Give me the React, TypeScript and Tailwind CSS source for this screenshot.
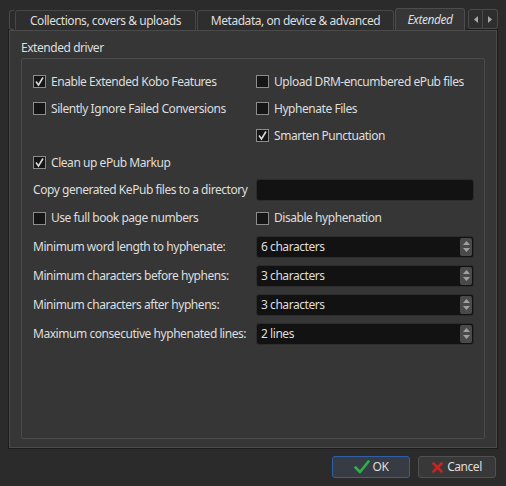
import React from "react";

function Check({ checked }: { checked?: boolean }) {
  return (
    <span className="relative inline-flex w-[13px] h-[13px] shrink-0 border border-[#8c8c8c] bg-[#161616] items-center justify-center">
      {checked && (
        <svg width="11" height="11" viewBox="0 0 11 11" className="absolute left-[0px] top-[0px]">
          <path d="M2 5.5 L4.5 9 L9 1.5" fill="none" stroke="#d8d8d8" strokeWidth="1.6" />
        </svg>
      )}
    </span>
  );
}

function CB({ label, checked }: { label: string; checked?: boolean }) {
  return (
    <div className="flex items-center gap-[5px]">
      <Check checked={checked} />
      <span>{label}</span>
    </div>
  );
}

function Spin({ value }: { value: string }) {
  return (
    <div className="flex items-center h-[22px] w-[218px] bg-[#121212] border border-[#2c2c2c] rounded-[3px] pl-[4px] pr-[1px]">
      <span className="flex-1">{value}</span>
      <span className="flex flex-col items-center justify-center gap-[3px] w-[12px] h-[18px] bg-[#4a4a4a] rounded-[2px]">
        <svg width="7" height="4" viewBox="0 0 7 4"><path d="M0 4 L3.5 0 L7 4 Z" fill="#a0a0a0" /></svg>
        <svg width="7" height="4" viewBox="0 0 7 4"><path d="M0 0 L3.5 4 L7 0 Z" fill="#a0a0a0" /></svg>
      </span>
    </div>
  );
}

export default function App() {
  return (
    <div
      className="w-[506px] h-[486px] bg-[#2b2b2b] text-[#dedede] text-[12px] tracking-[-0.45px] leading-none whitespace-nowrap overflow-hidden relative"
      style={{ fontFamily: '"Noto Sans", "Open Sans", sans-serif' }}
    >
      {/* tab bar */}
      <div className="flex items-end h-[30px] pt-[9px] pl-[9px]">
        <div className="w-[5px] h-[20px] border-l border-t border-b border-[#4a4a4a] rounded-l-[3px] mr-[1px]" />
        <div className="h-[20px] w-[181px] flex items-center justify-center border border-b-0 border-[#474747] rounded-t-[3px] bg-[#2e2e2e]">
          Collections, covers &amp; uploads
        </div>
        <div className="h-[20px] w-[197px] ml-[1px] flex items-center justify-center border border-b-0 border-[#474747] rounded-t-[3px] bg-[#2e2e2e]">
          Metadata, on device &amp; advanced
        </div>
        <div className="h-[22px] w-[70px] ml-[1px] flex items-center justify-center border border-b-0 border-[#4c4c4c] rounded-t-[3px] bg-[#363636] italic">
          Extended
        </div>
        <div className="ml-[3px] mb-[1px] flex h-[20px]">
          <div className="w-[15px] h-[20px] border border-[#4a4a4a] rounded-l-[3px] bg-[#2e2e2e] flex items-center justify-center">
            <svg width="4" height="7" viewBox="0 0 4 7"><path d="M4 0 L0 3.5 L4 7 Z" fill="#a8a8a8" /></svg>
          </div>
          <div className="w-[15px] h-[20px] border border-l-0 border-[#4a4a4a] rounded-r-[3px] bg-[#2e2e2e] flex items-center justify-center">
            <svg width="4" height="7" viewBox="0 0 4 7"><path d="M0 0 L4 3.5 L0 7 Z" fill="#a8a8a8" /></svg>
          </div>
        </div>
      </div>

      {/* pane */}
      <div className="ml-[9px] w-[488px] h-[418px] border border-[#4b4b4b] bg-[#363636] shadow-[0_0_0_1px_#1c1c1c] px-[11px] pt-[11px]">
        <div className="h-[16px]">Extended driver</div>
        <div className="h-[381px] border border-[#4a4a4a] rounded-[2px] pl-[11px] pr-[10px] pt-[9px] flex flex-col">
          <div className="h-[27px] flex items-center">
            <div className="w-[223px]"><CB label="Enable Extended Kobo Features" checked /></div>
            <CB label="Upload DRM-encumbered ePub files" />
          </div>
          <div className="h-[27px] flex items-center">
            <div className="w-[223px]"><CB label="Silently Ignore Failed Conversions" /></div>
            <CB label="Hyphenate Files" />
          </div>
          <div className="h-[27px] flex items-center">
            <div className="w-[223px]" />
            <CB label="Smarten Punctuation" checked />
          </div>
          <div className="h-[27px] flex items-center">
            <CB label="Clean up ePub Markup" checked />
          </div>
          <div className="h-[28px] flex items-center">
            <div className="w-[223px]">Copy generated KePub files to a directory</div>
            <div className="h-[22px] w-[218px] bg-[#121212] border border-[#2c2c2c] rounded-[3px]" />
          </div>
          <div className="h-[28px] flex items-center">
            <div className="w-[223px]"><CB label="Use full book page numbers" /></div>
            <CB label="Disable hyphenation" />
          </div>
          <div className="h-[29px] flex items-center">
            <div className="w-[223px]">Minimum word length to hyphenate:</div>
            <Spin value="6 characters" />
          </div>
          <div className="h-[29px] flex items-center">
            <div className="w-[223px]">Minimum characters before hyphens:</div>
            <Spin value="3 characters" />
          </div>
          <div className="h-[29px] flex items-center">
            <div className="w-[223px]">Minimum characters after hyphens:</div>
            <Spin value="3 characters" />
          </div>
          <div className="h-[29px] flex items-center">
            <div className="w-[223px]">Maximum consecutive hyphenated lines:</div>
            <Spin value="2 lines" />
          </div>
        </div>
      </div>

      {/* buttons */}
      <div className="flex justify-end gap-[8px] pr-[10px] mt-[8px]">
        <div className="w-[78px] h-[22px] border border-[#2f5fa8] rounded-[3px] bg-[#363b44] flex items-center justify-center gap-[3px]">
          <svg width="16" height="14" viewBox="0 0 16 14"><path d="M1.5 7.5 L6 12 L14.5 1.5" fill="none" stroke="#2bb34a" strokeWidth="2.6" strokeLinecap="round" strokeLinejoin="round" /></svg>
          <span>OK</span>
        </div>
        <div className="w-[78px] h-[22px] border border-[#505050] rounded-[3px] bg-[#383838] flex items-center justify-center gap-[4px]">
          <svg width="11" height="11" viewBox="0 0 11 11"><path d="M1.5 1.5 L9.5 9.5 M9.5 1.5 L1.5 9.5" fill="none" stroke="#d02020" strokeWidth="2.6" strokeLinecap="round" /></svg>
          <span>Cancel</span>
        </div>
      </div>
    </div>
  );
}
